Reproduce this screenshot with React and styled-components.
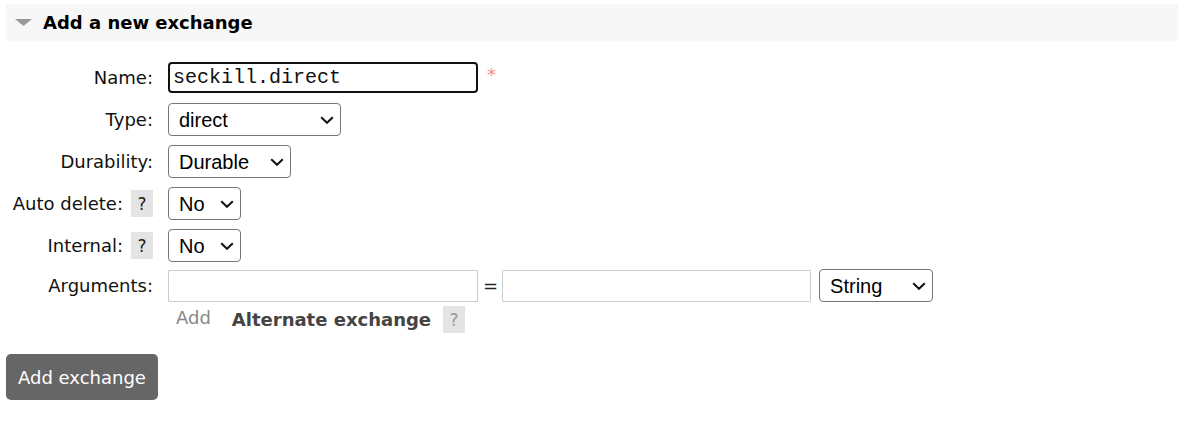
import React from 'react';
import styled, { createGlobalStyle } from 'styled-components';

const GlobalStyle = createGlobalStyle`
  body {
    margin: 0;
    background: #fff;
    font-family: "DejaVu Sans", Verdana, sans-serif;
    color: #111;
  }
`;

const Page = styled.div`
  padding: 4px 0 0 6px;
`;

const SectionHeader = styled.div`
  display: flex;
  align-items: center;
  gap: 11px;
  height: 37px;
  padding-left: 9px;
  background: #f7f7f7;
`;

const Title = styled.h2`
  margin: 0;
  font-size: 18px;
  font-weight: bold;
  color: #000;
`;

const Form = styled.div`
  display: grid;
  grid-template-columns: 147px auto;
  column-gap: 15px;
  row-gap: 9px;
  margin-top: 20px;
`;

const Label = styled.div`
  display: flex;
  justify-content: flex-end;
  align-items: center;
  gap: 8px;
  height: ${p => p.h || 33}px;
  font-size: 18px;
  color: #111;
  white-space: nowrap;
`;

const Help = styled.span`
  display: inline-flex;
  align-items: center;
  justify-content: center;
  width: 22px;
  height: 27px;
  background: #e4e4e4;
  font-size: 17px;
  color: ${p => (p.muted ? '#999' : '#222')};
`;

const Field = styled.div`
  display: flex;
  align-items: center;
  min-height: ${p => p.h || 33}px;
`;

const Stack = styled.div`
  display: flex;
  flex-direction: column;
  gap: 4px;
  margin-top: -2px;
`;

const TextInput = styled.input`
  box-sizing: border-box;
  width: ${p => p.w || 310}px;
  height: ${p => (p.focused ? 31 : 32)}px;
  padding: 0 3px;
  border: ${p => (p.focused ? '2px solid #111' : '1px solid #ccc')};
  border-radius: ${p => (p.focused ? 4 : 1)}px;
  font-family: "Liberation Mono", "Courier New", monospace;
  font-size: 20px;
  color: #111;
  outline: none;
  background: #fff;
`;

const Required = styled.span`
  margin-left: 9px;
  align-self: flex-start;
  margin-top: 3px;
  font-size: 18px;
  color: #f88;
`;

const Equals = styled.span`
  margin: 0 4px 0 5px;
  font-size: 18px;
  color: #222;
`;

const SelectWrap = styled.span`
  position: relative;
  display: inline-flex;
  margin-left: ${p => p.ml || 0}px;
`;

const Select = styled.select`
  appearance: none;
  box-sizing: border-box;
  width: ${p => p.w}px;
  height: 33px;
  padding: 0 28px 0 10px;
  border: 1px solid #767676;
  border-radius: 4px;
  background: #fff;
  font-family: "Liberation Sans", Arial, sans-serif;
  font-size: 20px;
  color: #000;
`;

const Chevron = styled.svg`
  position: absolute;
  right: 7px;
  top: 13px;
  pointer-events: none;
`;

const LinkRow = styled.div`
  display: flex;
  align-items: center;
  padding-left: 8px;
`;

const AddLink = styled.span`
  font-size: 18px;
  color: #888;
  margin-top: -5px;
`;

const AltLabel = styled.span`
  margin: 0 12px 0 21px;
  font-size: 18px;
  font-weight: bold;
  color: #444;
`;

const SubmitButton = styled.button`
  margin-top: 21px;
  height: 46px;
  padding: 0 12px;
  border: none;
  border-radius: 5px;
  background: #666;
  color: #fff;
  font-family: "DejaVu Sans", Verdana, sans-serif;
  font-size: 18px;
`;

function Dropdown({ width, value, options, ml }) {
  return (
    <SelectWrap ml={ml}>
      <Select w={width} defaultValue={value}>
        {options.map(o => (
          <option key={o}>{o}</option>
        ))}
      </Select>
      <Chevron width="14" height="8" viewBox="0 0 14 8">
        <path d="M1.2 1.2l5.8 5.6 5.8-5.6" fill="none" stroke="#111" strokeWidth="2" />
      </Chevron>
    </SelectWrap>
  );
}

export default function App() {
  return (
    <Page>
      <GlobalStyle />
      <SectionHeader>
        <svg width="17" height="7" viewBox="0 0 17 7">
          <polygon points="0,0 17,0 8.5,7" fill="#999" />
        </svg>
        <Title>Add a new exchange</Title>
      </SectionHeader>

      <Form>
        <Label>Name:</Label>
        <Field>
          <TextInput focused defaultValue="seckill.direct" />
          <Required>*</Required>
        </Field>

        <Label>Type:</Label>
        <Field>
          <Dropdown width={173} value="direct" options={['direct', 'fanout', 'headers', 'topic']} />
        </Field>

        <Label>Durability:</Label>
        <Field>
          <Dropdown width={123} value="Durable" options={['Durable', 'Transient']} />
        </Field>

        <Label>
          Auto delete: <Help>?</Help>
        </Label>
        <Field>
          <Dropdown width={73} value="No" options={['No', 'Yes']} />
        </Field>

        <Label>
          Internal: <Help>?</Help>
        </Label>
        <Field>
          <Dropdown width={73} value="No" options={['No', 'Yes']} />
        </Field>

        <Label h={29}>Arguments:</Label>
        <Stack>
          <Field>
            <TextInput />
            <Equals>=</Equals>
            <TextInput w={309} />
            <Dropdown ml={8} width={114} value="String" options={['String', 'Number', 'Boolean', 'List']} />
          </Field>
          <LinkRow>
            <AddLink>Add</AddLink>
            <AltLabel>Alternate exchange</AltLabel>
            <Help muted>?</Help>
          </LinkRow>
        </Stack>
      </Form>

      <SubmitButton>Add exchange</SubmitButton>
    </Page>
  );
}
